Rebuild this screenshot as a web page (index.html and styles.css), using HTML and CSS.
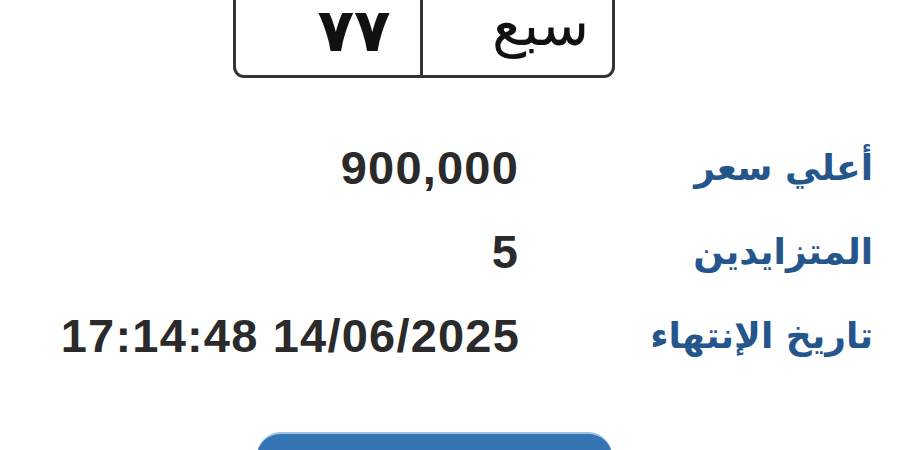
FILE: index.html
```html
<!DOCTYPE html>
<html lang="ar">
<head>
<meta charset="utf-8">
<link rel="stylesheet" href="styles.css">
</head>
<body>
<div class="page">
  <div class="plate">
    <div class="plate-cell plate-num">٧٧</div>
    <div class="plate-cell plate-letters">سبع</div>
  </div>
  <div class="details" dir="rtl">
    <div class="label">أعلي سعر</div>
    <div class="value">900,000</div>
    <div class="label">المتزايدين</div>
    <div class="value">5</div>
    <div class="label">تاريخ الإنتهاء</div>
    <div class="value" dir="ltr">17:14:48 14/06/2025</div>
  </div>
  <div class="button"></div>
</div>
</body>
</html>
```
FILE: styles.css
```css
html, body {
  margin: 0;
  padding: 0;
  background: #ffffff;
}
.page {
  width: 900px;
  height: 450px;
  overflow: hidden;
  background: #ffffff;
}
.plate {
  box-sizing: border-box;
  margin-left: 233px;
  width: 382px;
  height: 78px;
  border: 3px solid #333333;
  border-top: none;
  border-radius: 0 0 11px 11px;
  display: grid;
  grid-template-columns: 187px 1fr;
}
.plate-cell {
  display: flex;
  align-items: flex-end;
  justify-content: center;
  color: #111111;
  font-family: "DejaVu Sans", sans-serif;
  line-height: 0.7;
}
.plate-num {
  border-right: 3px solid #333333;
  font-size: 60px;
  font-weight: bold;
  padding-left: 52px;
  padding-bottom: 24px;
}
.plate-letters {
  font-size: 58px;
  padding-left: 46px;
  padding-bottom: 29px;
}
.details {
  margin-top: 48px;
  display: grid;
  grid-template-columns: 354px auto;
  padding-right: 27px;
  grid-auto-rows: 84px;
  line-height: 84px;
}
.label {
  font-family: "DejaVu Sans", sans-serif;
  font-weight: bold;
  font-size: 36px;
  color: #24568c;
  text-align: right;
}
.value {
  font-family: "Liberation Sans", Arial, sans-serif;
  font-weight: bold;
  font-size: 47px;
  color: #2a2a2a;
  text-align: right;
  letter-spacing: 1.2px;
}
.details .value[dir="ltr"] {
  justify-self: start;
  margin-right: -1px;
}
.button {
  margin-top: 54px;
  margin-left: 257px;
  width: 355px;
  height: 60px;
  background: #3474b3;
  border-top: 2px solid #9cc2e6;
  border-radius: 24px;
}
```
